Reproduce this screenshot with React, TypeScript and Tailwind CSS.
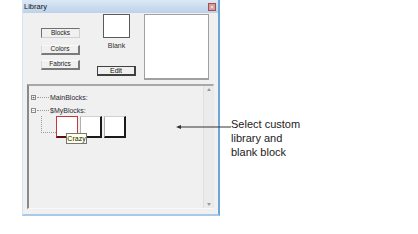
import React from "react";

const Btn = ({ label, pressed, mt }: { label: string; pressed?: boolean; mt: string }) => (
  <div
    className={
      "w-[39px] h-[10px] flex items-center justify-center text-[6.5px] leading-none text-[#222] bg-[#f0f0f0] " +
      mt +
      (pressed
        ? " border border-t-[#707070] border-l-[#707070] border-b-[#d0d0d0] border-r-[#d0d0d0]"
        : " border border-t-[#fafafa] border-l-[#d8d8d8] border-b-[#7a7a7a] border-r-[#7a7a7a] border-r-2 border-b-2")
    }
  >
    {label}
  </div>
);

const Thumb = ({ red }: { red?: boolean }) => (
  <div
    className={
      "w-[22px] h-[22px] bg-white " +
      (red
        ? "border border-[#c03a3a] border-b-2 border-b-[#5a1010]"
        : "border border-t-[#d0d0d0] border-l-[#b0b0b0] border-r-2 border-r-[#1a1a1a] border-b-2 border-b-[#1a1a1a]")
    }
  />
);

export default function App() {
  return (
    <div className="w-[418px] h-[234px] bg-white relative flex font-['Liberation_Sans',Arial,sans-serif]">
      {/* Window */}
      <div className="ml-[22px] w-[198px] h-[216px] flex flex-col bg-[#f0f0f0] border-l border-l-[#d6e4f2] border-r-2 border-r-[#6aa6da] border-b-2 border-b-[#a9c9e8]">
        {/* Title bar */}
        <div className="h-[13px] flex items-center justify-between bg-gradient-to-b from-[#dce8f5] to-[#bcd2ea] pl-[1px] pr-[2px]">
          <span className="text-[7.5px] leading-none text-[#111]">Library</span>
          <div className="w-[8px] h-[8px] bg-[#d89a9a] border border-[#a05050] flex items-center justify-center text-[6px] leading-none text-white">
            ×
          </div>
        </div>
        {/* Top area */}
        <div className="flex h-[71px]">
          <div className="ml-[18px] flex flex-col">
            <Btn label="Blocks" pressed mt="mt-[15px]" />
            <Btn label="Colors" mt="mt-[7px]" />
            <Btn label="Fabrics" mt="mt-[5px]" />
          </div>
          <div className="ml-[17px] w-[39px] flex flex-col items-center">
            <div className="mt-[1px] w-[27px] h-[24px] bg-white border border-[#5a5a5a]" />
            <div className="mt-[4px] text-[7px] leading-none text-[#333]">Blank</div>
            <div className="mt-[17px] w-[39px] h-[10px] flex items-center justify-center text-[7px] leading-none text-[#111] bg-[#f0f0f0] border border-[#404040] border-b-2 border-r-2">
              Edit
            </div>
          </div>
          <div className="ml-[8px] mt-[1px] w-[65px] h-[66px] bg-white border border-[#a0a0a0] border-b-2" />
        </div>
        {/* Lower panel */}
        <div className="ml-[4px] w-[187px] h-[125px] flex border-t-2 border-t-[#a8a8a8] border-l-2 border-l-[#8a8a8a] border-r border-r-[#e8e8e8] border-b border-b-[#fafafa]">
          <div className="flex-1 relative">
            {/* Tree */}
            <div className="flex flex-col pt-[7px] pl-[2px]">
              <div className="flex items-center h-[9px]">
                <div className="w-[5px] h-[5px] border border-[#8a8a8a] bg-white flex items-center justify-center text-[5px] leading-none text-[#333]">
                  +
                </div>
                <div className="w-[12px] border-t border-dotted border-[#9a9a9a] mx-[1px]" />
                <span className="text-[7px] leading-none text-[#2a2a30]">MainBlocks:</span>
              </div>
              <div className="flex items-center h-[9px] mt-[4px]">
                <div className="w-[5px] h-[5px] border border-[#8a8a8a] bg-white flex items-center justify-center text-[5px] leading-none text-[#333]">
                  −
                </div>
                <div className="w-[12px] border-t border-dotted border-[#9a9a9a] mx-[1px]" />
                <span className="text-[7px] leading-none text-[#2a2a30]">$MyBlocks:</span>
              </div>
              <div className="flex mt-[1px]">
                <div className="ml-[10px] w-[15px] h-[17px] border-l border-b border-dotted border-[#9a9a9a]" />
                <div className="flex gap-[2px] relative">
                  <Thumb red />
                  <Thumb />
                  <Thumb />
                  <div className="absolute left-[10px] top-[17px] w-[21px] h-[11px] bg-[#ffffe1] border border-[#767676] flex items-center justify-center text-[7px] leading-none text-[#222]">
                    Crazy
                  </div>
                </div>
              </div>
            </div>
          </div>
          {/* Scrollbar */}
          <div className="w-[10px] bg-[#ebebeb] border-l border-l-[#e0e0e0] flex flex-col justify-between items-center py-[2px]">
            <svg width="4" height="3" viewBox="0 0 4 3">
              <path d="M0 3 L2 0 L4 3 Z" fill="#9a9a9a" />
            </svg>
            <svg width="4" height="3" viewBox="0 0 4 3">
              <path d="M0 0 L2 3 L4 0 Z" fill="#9a9a9a" />
            </svg>
          </div>
        </div>
      </div>

      {/* Annotation text */}
      <div className="ml-[11px] mt-[117px] text-[11px] leading-[14px] text-[#222]">
        <div>Select custom</div>
        <div>library and</div>
        <div>blank block</div>
      </div>

      {/* Arrow overlay */}
      <svg className="absolute left-[176px] top-[124px]" width="56" height="6" viewBox="0 0 56 6">
        <line x1="2" y1="3" x2="55" y2="3" stroke="#333" strokeWidth="1" />
        <path d="M0 3 L5 1 L5 5 Z" fill="#333" />
      </svg>
    </div>
  );
}
